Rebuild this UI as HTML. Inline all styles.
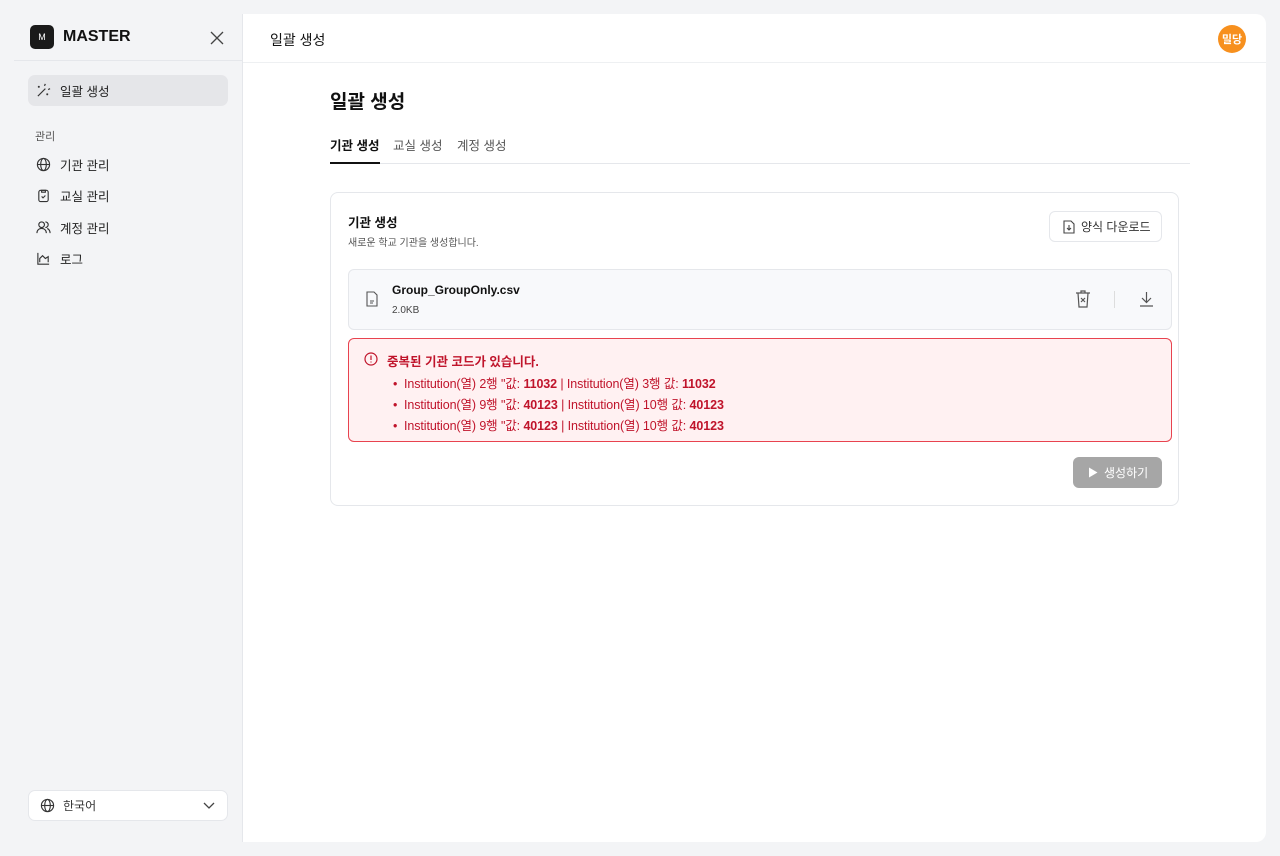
<!DOCTYPE html>
<html><head><meta charset="utf-8"><style>
*{box-sizing:border-box;margin:0;padding:0}
body{width:1280px;height:856px;background:#f3f4f6;font-family:"Liberation Sans","Noto Sans CJK KR",sans-serif;color:#111;position:relative;overflow:hidden}
.abs{position:absolute}
.side-item{position:absolute;left:28px;width:200px;height:31px;display:flex;align-items:center;padding-left:8px;font-size:12.5px;color:#222;border-radius:7px}
.side-item svg{margin-right:9px}
.main{position:absolute;left:242px;top:14px;width:1024px;height:828px;background:#fff;border-left:1px solid #e5e7eb;border-radius:0 10px 10px 0}
.red{color:#c0142b}
.li{position:absolute;left:56px;font-size:12.5px;color:#c0142b;letter-spacing:-0.1px}
.li b{font-weight:700}
</style></head><body>
<div class="abs" style="left:30px;top:25px;width:24px;height:24px;background:#1a1a1a;border-radius:5px;color:#fff;font-size:9px;display:flex;align-items:center;justify-content:center">M</div>
<div class="abs" style="left:63px;top:28px;font-size:16px;font-weight:700">MASTER</div>
<svg class="abs" style="left:210px;top:31px" width="14" height="14" viewBox="0 0 14 14" stroke="#444" stroke-width="1.3"><path d="M1 1L13 13M13 1L1 13"/></svg>
<div class="abs" style="left:14px;top:60px;width:228px;height:1px;background:#e5e7eb"></div>
<div class="side-item" style="top:75px;background:#e5e6e9"><svg width="15" height="15" viewBox="0 0 16 16" fill="none" stroke="#333" stroke-width="1.3"><path d="M2 14L10 6M9 3l1-2M13 7l2-1M3 3l0 2M2 4h2M12 11v2M11 12h2"/></svg>일괄 생성</div>
<div class="abs" style="left:35px;top:128px;font-size:11px;color:#555">관리</div>
<div class="side-item" style="top:149px"><svg width="15" height="15" viewBox="0 0 16 16" fill="none" stroke="#333" stroke-width="1.2"><circle cx="8" cy="8" r="6.5"/><ellipse cx="8" cy="8" rx="3" ry="6.5"/><path d="M1.5 8h13"/></svg>기관 관리</div>
<div class="side-item" style="top:180px"><svg width="15" height="15" viewBox="0 0 16 16" fill="none" stroke="#333" stroke-width="1.2"><rect x="3" y="2.5" width="10" height="12" rx="2"/><path d="M6 2.5h4v2H6zM6 9l1.5 1.5L10 8"/></svg>교실 관리</div>
<div class="side-item" style="top:212px"><svg width="15" height="15" viewBox="0 0 16 16" fill="none" stroke="#333" stroke-width="1.2"><circle cx="6" cy="5" r="3"/><path d="M1 14c0-3 2-5 5-5s5 2 5 5M10 2a3 3 0 010 6M12 9c2 1 3 3 3 5"/></svg>계정 관리</div>
<div class="side-item" style="top:243px"><svg width="15" height="15" viewBox="0 0 16 16" fill="none" stroke="#333" stroke-width="1.2"><path d="M2 2v12h12M4 12V8l3-3 3 3 3-2v6"/></svg>로그</div>
<div class="abs" style="left:28px;top:790px;width:200px;height:31px;background:#fff;border:1px solid #e5e7eb;border-radius:7px;display:flex;align-items:center;padding-left:11px;font-size:12px;color:#333">
<svg width="15" height="15" viewBox="0 0 16 16" fill="none" stroke="#333" stroke-width="1.2" style="margin-right:8px"><circle cx="8" cy="8" r="6.5"/><ellipse cx="8" cy="8" rx="3" ry="6.5"/><path d="M1.5 8h13"/></svg>한국어
<svg class="abs" style="left:174px;top:11px" width="12" height="8" viewBox="0 0 12 8" fill="none" stroke="#444" stroke-width="1.3"><path d="M1 1l5 5 5-5"/></svg></div>
<div class="main">
<div class="abs" style="left:27px;top:16px;font-size:14px">일괄 생성</div>
<div class="abs" style="left:975px;top:11px;width:28px;height:28px;border-radius:50%;background:#f7901e;color:#fff;font-size:11px;font-weight:700;display:flex;align-items:center;justify-content:center">밀당</div>
<div class="abs" style="left:0;top:48px;width:1023px;height:1px;background:#eef0f2"></div>
<div class="abs" style="left:87px;top:73px;font-size:19px;font-weight:700">일괄 생성</div>
<div class="abs" style="left:87px;top:121px;font-size:12.5px;font-weight:700">기관 생성</div>
<div class="abs" style="left:150px;top:121px;font-size:12.5px;color:#555">교실 생성</div>
<div class="abs" style="left:214px;top:121px;font-size:12.5px;color:#555">계정 생성</div>
<div class="abs" style="left:87px;top:149px;width:860px;height:1px;background:#e5e7eb"></div>
<div class="abs" style="left:87px;top:148px;width:50px;height:2px;background:#111"></div>
<div class="abs" style="left:87px;top:178px;width:849px;height:314px;border:1px solid #e5e7eb;border-radius:8px">
<div class="abs" style="left:17px;top:19px;font-size:12.5px;font-weight:700">기관 생성</div>
<div class="abs" style="left:17px;top:41px;font-size:10px;color:#555">새로운 학교 기관을 생성합니다.</div>
<div class="abs" style="left:718px;top:18px;width:113px;height:31px;border:1px solid #e5e7eb;border-radius:6px;display:flex;align-items:center;padding-left:13px;font-size:12px;color:#333">
<svg width="12" height="14" viewBox="0 0 12 14" fill="none" stroke="#444" stroke-width="1.1" style="margin-right:6px"><path d="M1 1h7l3 3v9H1zM6 5v5M4 8l2 2 2-2"/></svg>양식 다운로드</div>
<div class="abs" style="left:17px;top:76px;width:824px;height:61px;background:#f8f9fb;border:1px solid #e5e7eb;border-radius:6px">
<svg class="abs" style="left:17px;top:21px" width="12" height="16" viewBox="0 0 12 16" fill="none" stroke="#555" stroke-width="1.1"><path d="M1 1h7l3 3v11H1zM4 10h4M4 12h3"/></svg>
<div class="abs" style="left:43px;top:13px;font-size:12px;font-weight:700">Group_GroupOnly.csv</div>
<div class="abs" style="left:43px;top:35px;font-size:10px;color:#444">2.0KB</div>
<svg class="abs" style="left:726px;top:19px" width="16" height="19" viewBox="0 0 16 19" fill="none" stroke="#555" stroke-width="1.2"><path d="M1 4h14M6 4V2h4v2M3 4l1 14h8l1-14M6 9l4 4M10 9l-4 4"/></svg>
<div class="abs" style="left:765px;top:21px;width:1px;height:17px;background:#ddd"></div>
<svg class="abs" style="left:790px;top:21px" width="15" height="16" viewBox="0 0 15 16" fill="none" stroke="#555" stroke-width="1.2"><path d="M7.5 1v10M3 7l4.5 4.5L12 7M1 15h13"/></svg>
</div>
<div class="abs" style="left:17px;top:145px;width:824px;height:104px;background:#fff1f2;border:1px solid #e8434f;border-radius:6px">
<svg class="abs" style="left:15px;top:13px" width="14" height="14" viewBox="0 0 14 14" fill="none" stroke="#c0142b" stroke-width="1.2"><circle cx="7" cy="7" r="6"/><path d="M7 3.5v4.5M7 9.5v1"/></svg>
<div class="abs red" style="left:38px;top:12px;font-size:12.5px;font-weight:700">중복된 기관 코드가 있습니다.</div>
<div class="li" style="left:44px;top:34px">•&nbsp; Institution(열) 2행 "값: <b>11032</b> | Institution(열) 3행 값: <b>11032</b></div>
<div class="li" style="left:44px;top:55px">•&nbsp; Institution(열) 9행 "값: <b>40123</b> | Institution(열) 10행 값: <b>40123</b></div>
<div class="li" style="left:44px;top:76px">•&nbsp; Institution(열) 9행 "값: <b>40123</b> | Institution(열) 10행 값: <b>40123</b></div>
</div>
<div class="abs" style="left:742px;top:264px;width:89px;height:31px;background:#a6a6a6;border-radius:6px;color:#fff;font-size:12px;display:flex;align-items:center;padding-left:15px">
<svg width="10" height="11" viewBox="0 0 10 11" style="margin-right:6px"><path d="M1 0.5L9.5 5.5 1 10.5z" fill="#fff"/></svg>생성하기</div>
</div>
</div>
</body></html>
